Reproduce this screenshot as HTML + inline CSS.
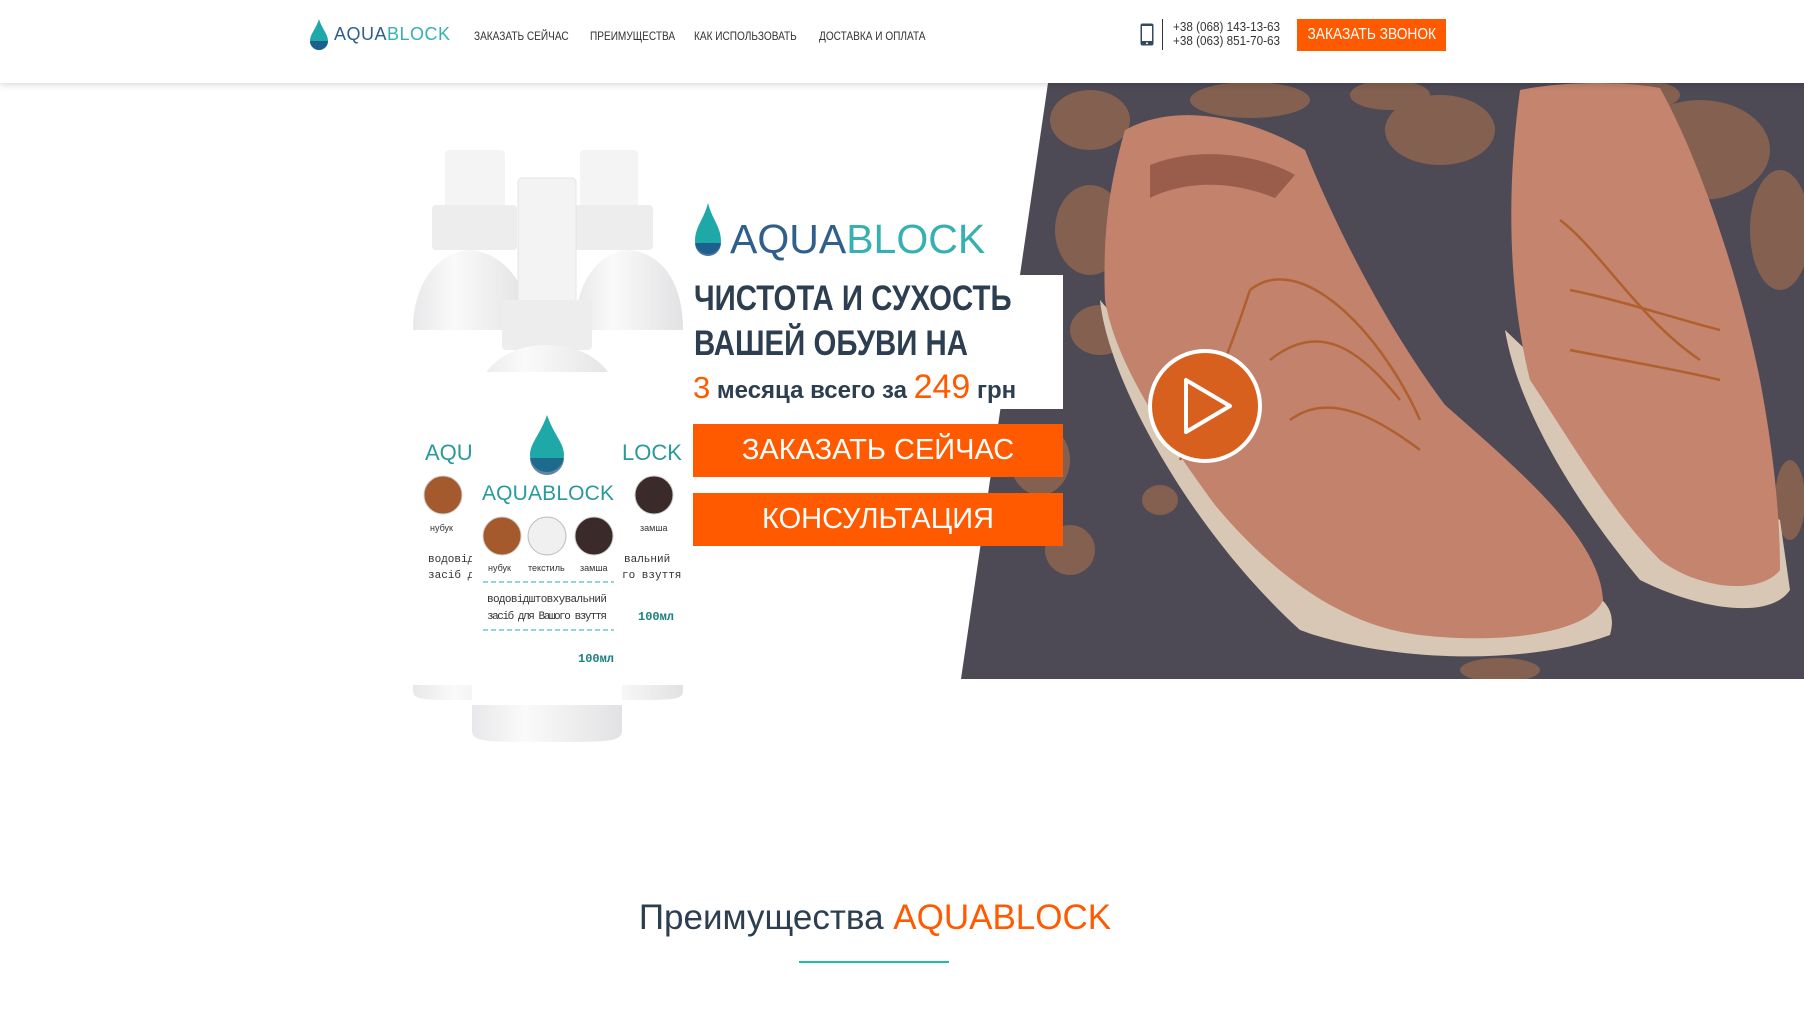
<!DOCTYPE html>
<html><head><meta charset="utf-8">
<style>
*{margin:0;padding:0;box-sizing:border-box}
body{width:1804px;height:1020px;background:#fff;position:relative;overflow:hidden;font-family:"Liberation Sans",sans-serif;color:#2c3e50}
.abs{position:absolute}
.hdr{left:0;top:0;width:1804px;height:83px;background:#fff;box-shadow:0 2px 6px rgba(0,0,0,.15);z-index:5}
.nav{top:29px;font-size:12px;color:#333;white-space:nowrap;transform:scaleX(.84);transform-origin:left top}
.logo{font-weight:300;white-space:nowrap;color:#1a9aa0}
.btn{background:#ff5a00;color:#fff;text-align:center;white-space:nowrap}
</style></head><body>
<div class="abs hdr">
  <svg class="abs" style="left:309px;top:19px" width="20" height="32" viewBox="0 0 20 32"><path d="M10 0 C7 10 1 15 1 22 a9 9 0 0 0 18 0 C19 15 13 10 10 0z" fill="#1fa8a8"/><path d="M1 22 a9 9 0 0 0 18 0 z" fill="#1c4f86" opacity=".8"/></svg>
  <div class="abs logo" style="left:334px;top:24px;font-size:18px;letter-spacing:.5px"><span style="color:#2f5f8a">AQUA</span><span style="color:#36b0b0">BLOCK</span></div>
  <div class="abs nav" style="left:474px">ЗАКАЗАТЬ СЕЙЧАС</div>
  <div class="abs nav" style="left:590px">ПРЕИМУЩЕСТВА</div>
  <div class="abs nav" style="left:694px">КАК ИСПОЛЬЗОВАТЬ</div>
  <div class="abs nav" style="left:819px">ДОСТАВКА И ОПЛАТА</div>
  <svg class="abs" style="left:1140px;top:23px" width="14" height="23" viewBox="0 0 14 23"><rect x="0.5" y="0.5" width="13" height="22" rx="2" fill="#34495e"/><rect x="2" y="3" width="10" height="15" fill="#fff"/><circle cx="7" cy="20.3" r="1" fill="#fff"/></svg>
  <div class="abs" style="left:1162px;top:19px;width:1px;height:31px;background:#333"></div>
  <div class="abs" style="left:1173px;top:20px;font-size:13px;line-height:14px;color:#333;white-space:nowrap;transform:scaleX(.9);transform-origin:left top">+38 (068) 143-13-63<br>+38 (063) 851-70-63</div>
  <div class="abs btn" style="left:1297px;top:19px;width:149px;height:32px;line-height:32px;font-size:16px"><span style="display:inline-block;transform:scaleX(.86)">ЗАКАЗАТЬ ЗВОНОК</span></div>
</div>

<svg class="abs" style="left:0;top:0" width="1804" height="1020">
<defs><clipPath id="cp"><polygon points="1048,83 1804,83 1804,679 961,679"/></clipPath>
<linearGradient id="bt" x1="0" x2="1"><stop offset="0" stop-color="#e8e8ea"/><stop offset=".35" stop-color="#fafafa"/><stop offset="1" stop-color="#e2e2e4"/></linearGradient></defs>
<g clip-path="url(#cp)">
<rect x="950" y="83" width="860" height="600" fill="#4d4955"/>
<g fill="#a8704c" opacity=".6">
<ellipse cx="1090" cy="120" rx="40" ry="30"/><ellipse cx="1090" cy="230" rx="35" ry="45"/><ellipse cx="1100" cy="330" rx="30" ry="25"/>
<ellipse cx="1250" cy="100" rx="60" ry="18"/><ellipse cx="1440" cy="130" rx="55" ry="35"/><ellipse cx="1390" cy="95" rx="40" ry="15"/>
<ellipse cx="1700" cy="150" rx="70" ry="50"/><ellipse cx="1780" cy="230" rx="30" ry="60"/><ellipse cx="1640" cy="95" rx="40" ry="15"/>
<ellipse cx="1040" cy="460" rx="30" ry="35"/><ellipse cx="1070" cy="550" rx="25" ry="25"/><ellipse cx="1160" cy="500" rx="18" ry="15"/>
<ellipse cx="1500" cy="670" rx="40" ry="12"/><ellipse cx="1790" cy="500" rx="15" ry="40"/>
</g>
<path d="M1100 300 C1108 380 1190 530 1300 630 C1380 660 1520 668 1610 635 C1620 600 1590 590 1560 580 L1400 560 L1125 330z" fill="#d8c7b4"/>
<path d="M1125 130 C1180 100 1255 120 1305 150 C1335 225 1385 325 1445 405 C1525 475 1600 540 1603 600 C1590 632 1505 645 1420 635 C1335 625 1265 565 1215 505 C1160 430 1115 360 1105 300 C1102 225 1112 175 1125 130z" fill="#c2826c"/>
<path d="M1150 165 C1200 145 1260 155 1295 175 L1275 198 C1225 178 1180 183 1150 198z" fill="#9a5d4c"/>
<path d="M1505 330 C1520 420 1590 520 1640 580 C1700 610 1770 620 1790 590 L1780 520 L1600 420z" fill="#d8c7b4"/>
<path d="M1520 90 C1570 80 1630 82 1660 88 C1700 160 1740 280 1760 380 C1775 460 1780 520 1780 570 C1760 595 1700 590 1660 560 C1610 510 1570 440 1530 380 C1510 300 1505 200 1520 90z" fill="#c4846d"/>
<g stroke="#b0602e" stroke-width="2.5" fill="none"><path d="M1250 290 C1300 250 1380 330 1420 420"/><path d="M1270 360 C1320 320 1360 350 1400 400"/><path d="M1290 420 C1330 390 1380 420 1420 450"/><path d="M1250 290 C1220 380 1200 420 1180 460"/><path d="M1560 220 C1600 250 1640 320 1700 360"/><path d="M1570 290 C1620 300 1680 320 1720 330"/><path d="M1570 350 C1620 360 1680 370 1720 380"/></g>
<circle cx="1205" cy="406" r="55" fill="#d8601f" stroke="#fff" stroke-width="4"/>
<path d="M1186 380 L1186 432 L1230 406z" fill="none" stroke="#fff" stroke-width="4" stroke-linejoin="round"/>
</g>
<g>
<rect x="445" y="150" width="60" height="60" rx="4" fill="#f4f4f5"/><rect x="432" y="205" width="85" height="45" rx="4" fill="#ededee"/>
<path d="M413 330 C413 280 440 252 470 250 C500 252 530 280 530 330 V690 C530 700 520 700 470 700 C420 700 413 700 413 690z" fill="url(#bt)"/>
<rect x="413" y="330" width="117" height="355" fill="#fff"/>
<rect x="580" y="150" width="58" height="60" rx="4" fill="#f4f4f5"/><rect x="568" y="205" width="85" height="45" rx="4" fill="#ededee"/>
<path d="M575 330 C575 280 600 252 628 250 C660 252 683 280 683 330 V690 C683 700 675 700 628 700 C582 700 575 700 575 690z" fill="url(#bt)"/>
<rect x="575" y="330" width="108" height="355" fill="#fff"/>
<text x="425" y="460" font-size="22" fill="#2a9a9a" font-family="Liberation Sans" font-weight="300">AQU</text>
<text x="622" y="460" font-size="22" fill="#2a9a9a" font-family="Liberation Sans" font-weight="300">LOCK</text>
<circle cx="443" cy="495" r="19" fill="#a55a2e" stroke="#ccc"/><circle cx="654" cy="495" r="19" fill="#3a2a2a" stroke="#ccc"/>
<text x="430" y="531" font-size="9" fill="#333">нубук</text><text x="640" y="531" font-size="9" fill="#333">замша</text>
<text x="428" y="562" font-size="11" fill="#333" font-family="Liberation Mono">водовід</text><text x="428" y="578" font-size="11" fill="#333" font-family="Liberation Mono">засіб дл</text>
<text x="624" y="562" font-size="11" fill="#333" font-family="Liberation Mono">вальний</text><text x="622" y="578" font-size="11" fill="#333" font-family="Liberation Mono">го взуття</text>
<text x="638" y="620" font-size="12" fill="#1a8080" font-weight="bold" font-family="Liberation Mono">100мл</text>
<rect x="518" y="178" width="58" height="130" rx="4" fill="#f3f3f4" stroke="#e4e4e4"/><rect x="502" y="300" width="90" height="50" rx="4" fill="#ededee"/>
<path d="M472 420 C472 370 505 345 547 345 C590 345 622 370 622 420 V730 C622 742 610 742 547 742 C484 742 472 742 472 730z" fill="url(#bt)"/>
<rect x="472" y="372" width="150" height="333" fill="#fff"/>
<path d="M547 415 C540 435 530 443 530 455 a17 17 0 0 0 34 0 C564 443 554 435 547 415z" fill="#1fa8a8"/><path d="M530 458 a17 17 0 0 0 34 0z" fill="#1c5080" opacity=".7"/>
<text x="482" y="500" font-size="21" fill="#2a9a9a" font-family="Liberation Sans" font-weight="300" textLength="132">AQUABLOCK</text>
<circle cx="502" cy="536" r="19" fill="#a55a2e" stroke="#ccc"/><circle cx="547" cy="536" r="19" fill="#f0f0f0" stroke="#bbb"/><circle cx="594" cy="536" r="19" fill="#3a2a2a" stroke="#ccc"/>
<text x="488" y="571" font-size="9" fill="#333">нубук</text><text x="528" y="571" font-size="9" fill="#333">текстиль</text><text x="580" y="571" font-size="9" fill="#333">замша</text>
<line x1="483" y1="582" x2="614" y2="582" stroke="#2aaaaa" stroke-dasharray="5 3"/>
<text x="487" y="602" font-size="11" fill="#333" font-family="Liberation Mono" textLength="120">водовідштовхувальний</text>
<text x="487" y="619" font-size="11" fill="#333" font-family="Liberation Mono" textLength="120">засіб для Вашого взуття</text>
<line x1="483" y1="630" x2="614" y2="630" stroke="#2aaaaa" stroke-dasharray="5 3"/>
<text x="578" y="662" font-size="12" fill="#1a8080" font-weight="bold" font-family="Liberation Mono">100мл</text>
</g>
</svg>

<svg class="abs" style="left:694px;top:203px" width="28" height="54" viewBox="0 0 28 54"><path d="M14 0 C10 16 1 24 1 38 a13 13 0 0 0 26 0 C27 24 18 16 14 0z" fill="#1fa8a8"/><path d="M1 40 a13 13 0 0 0 26 0z" fill="#1c4f86" opacity=".8"/></svg>
<div class="abs logo" style="left:730px;top:216px;font-size:41px"><span style="color:#2f5f8a">AQUA</span><span style="color:#36b0b0">BLOCK</span></div>
<div class="abs" style="left:693px;top:275px;width:370px;height:134px;background:#fff"></div>
<div class="abs" style="left:694px;top:276px;font-size:35px;font-weight:bold;line-height:45px;color:#2c3e50;white-space:nowrap;transform:scaleX(.84);transform-origin:left top">ЧИСТОТА И СУХОСТЬ<br>ВАШЕЙ ОБУВИ НА</div>
<div class="abs" style="left:693px;top:368px;font-size:24px;font-weight:bold;color:#2c3e50;white-space:nowrap"><span style="color:#ff5a00;font-size:31px;font-weight:normal">3</span> месяца всего за <span style="color:#ff5a00;font-size:34px;font-weight:normal">249</span> грн</div>
<div class="abs btn" style="left:693px;top:424px;width:370px;height:53px;line-height:53px;font-size:29px">ЗАКАЗАТЬ СЕЙЧАС</div>
<div class="abs btn" style="left:693px;top:493px;width:370px;height:53px;line-height:53px;font-size:29px">КОНСУЛЬТАЦИЯ</div>

<div class="abs" style="left:0;top:898px;width:1750px;text-align:center;font-size:35px;color:#2c3e50;white-space:nowrap">Преимущества <span style="color:#ff5a00">AQUABLOCK</span></div>
<div class="abs" style="left:799px;top:961px;width:150px;height:2px;background:#1fbfa0"></div>
</body></html>
